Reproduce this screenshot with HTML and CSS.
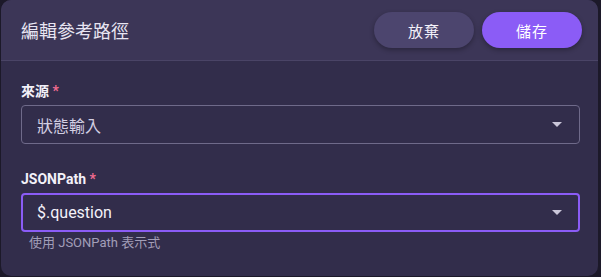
FILE: index.html
```html
<!DOCTYPE html>
<html>
  <head>
    <meta charset="utf-8">
    <title>編輯參考路徑</title>
    <link rel="stylesheet" href="styles.css">
  </head>
  <body>
    <div class="dialog">
      <div class="dialog-header">
        <div class="dialog-title">編輯參考路徑</div>
        <div class="actions">
          <button class="btn btn-cancel">放棄</button>
          <button class="btn btn-save">儲存</button>
        </div>
      </div>

      <div class="dialog-body">
        <div class="form-row">
          <div class="label">來源 <span class="required">*</span></div>
          <div class="select">
            <span class="select-value muted">狀態輸入</span>
            <span class="caret"></span>
          </div>
        </div>

        <div class="form-row">
          <div class="label">JSONPath <span class="required">*</span></div>
          <div class="select focused">
            <span class="select-value">$.question</span>
            <span class="caret"></span>
          </div>
          <div class="hint">使用 JSONPath 表示式</div>
        </div>
      </div>
    </div>
  </body>
</html>
```

FILE: styles.css
```css
body {
  background: #1c1929;
  font-family: Roboto, 'Noto Sans CJK TC', sans-serif;
  margin: 0;
}

.dialog {
  background: #322d4b;
  border-radius: 10px;
  box-sizing: border-box;
  height: 276px;
  margin-left: 1px;
  overflow: hidden;
  width: 597px;
}

.dialog-header {
  align-items: center;
  background: #3c3657;
  border-bottom: 1px solid #4a4466;
  box-sizing: border-box;
  display: flex;
  height: 61px;
  justify-content: space-between;
  padding: 0 16px 0 20px;
}

.dialog-title {
  color: #e8e5f2;
  font-size: 18px;
}

.actions {
  display: flex;
  gap: 8px;
}

.btn {
  border: none;
  border-radius: 18px;
  box-shadow: 0 2px 5px rgba(0, 0, 0, 0.3);
  color: #f4f2fa;
  font-family: inherit;
  font-size: 15px;
  height: 36px;
  letter-spacing: 1px;
  width: 100px;
}

.btn-cancel {
  background: #4c456e;
}

.btn-save {
  background: #8b5cf6;
  color: #fff;
}

.dialog-body {
  padding: 20px 18px 0 20px;
}

.form-row + .form-row {
  margin-top: 25px;
}

.label {
  color: #f3f1f9;
  font-size: 14px;
  font-weight: 700;
  line-height: 20px;
  margin-bottom: 4px;
}

.required {
  color: #ef6b8f;
}

.select {
  align-items: center;
  border: 1px solid #6f6a8a;
  border-radius: 4px;
  box-sizing: border-box;
  display: flex;
  height: 39px;
  justify-content: space-between;
  padding-right: 17px;
}

.select.focused {
  border: 2px solid #8b5cf6;
  padding-right: 16px;
}

.select-value {
  color: #f4f2fa;
  font-size: 16px;
  margin-left: 15px;
}

.select.focused .select-value {
  margin-left: 14px;
}

.select-value.muted {
  color: #d2cee2;
}

.caret {
  border-left: 5px solid transparent;
  border-right: 5px solid transparent;
  border-top: 5px solid #cbc7da;
  height: 0;
  width: 0;
}

.hint {
  color: #a29eb8;
  font-size: 13px;
  line-height: 17px;
  margin-top: 2px;
  padding-left: 8px;
}
```
